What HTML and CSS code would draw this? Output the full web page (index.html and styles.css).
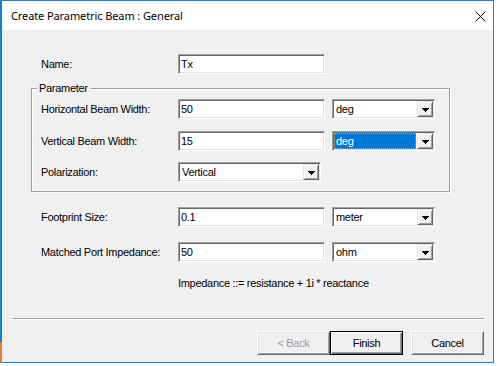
FILE: index.html
```html
<!DOCTYPE html>
<html lang="en">
<head>
  <meta charset="UTF-8">
  <title>Create Parametric Beam : General</title>
  <link rel="stylesheet" href="styles.css">
</head>
<body>
  <div class="window">
    <div class="titlebar">
      <span class="title">Create Parametric Beam : General</span>
      <svg class="close" width="11" height="11" viewBox="0 0 11 11">
        <path d="M0.5 0.5 L10.5 10.5 M10.5 0.5 L0.5 10.5" stroke="#000" stroke-width="1"/>
      </svg>
    </div>
    <div class="content">
      <div class="row">
        <label>Name:</label>
        <div class="field">Tx</div>
      </div>

      <div class="group">
        <span class="group-title">Parameter</span>
        <div class="row">
          <label>Horizontal Beam Width:</label>
          <div class="field">50</div>
          <div class="combo">
            <span class="combo-text">deg</span>
            <span class="combo-btn"><svg width="7" height="4" viewBox="0 0 7 4"><polygon points="0,0 7,0 3.5,4" fill="#000"/></svg></span>
          </div>
        </div>
        <div class="row row-v">
          <label>Vertical Beam Width:</label>
          <div class="field">15</div>
          <div class="combo">
            <span class="combo-text selected">deg</span>
            <span class="combo-btn"><svg width="7" height="4" viewBox="0 0 7 4"><polygon points="0,0 7,0 3.5,4" fill="#000"/></svg></span>
          </div>
        </div>
        <div class="row row-p">
          <label>Polarization:</label>
          <div class="combo combo-wide">
            <span class="combo-text">Vertical</span>
            <span class="combo-btn"><svg width="7" height="4" viewBox="0 0 7 4"><polygon points="0,0 7,0 3.5,4" fill="#000"/></svg></span>
          </div>
        </div>
      </div>

      <div class="row row-foot">
        <label>Footprint Size:</label>
        <div class="field">0.1</div>
        <div class="combo">
          <span class="combo-text">meter</span>
          <span class="combo-btn"><svg width="7" height="4" viewBox="0 0 7 4"><polygon points="0,0 7,0 3.5,4" fill="#000"/></svg></span>
        </div>
      </div>
      <div class="row row-imp">
        <label>Matched Port Impedance:</label>
        <div class="field">50</div>
        <div class="combo">
          <span class="combo-text">ohm</span>
          <span class="combo-btn"><svg width="7" height="4" viewBox="0 0 7 4"><polygon points="0,0 7,0 3.5,4" fill="#000"/></svg></span>
        </div>
      </div>

      <p class="note">Impedance ::= resistance + 1i * reactance</p>

      <div class="separator"></div>

      <div class="buttons">
        <button class="btn" disabled>&lt; Back</button>
        <button class="btn default">Finish</button>
        <button class="btn cancel">Cancel</button>
      </div>
    </div>
  </div>
</body>
</html>
```

FILE: styles.css
```css
body {
  margin: 0;
  background: #fff;
  font-family: "Liberation Sans", Arial, sans-serif;
  font-size: 11px;
  letter-spacing: -0.3px;
  color: #000;
}
.window {
  position: relative;
  width: 494px;
  height: 363px;
  box-sizing: border-box;
  border: 1px solid #1a7fd4;
  border-left-width: 2px;
  background: #f0f0f0;
}
/* stray orange edge at bottom left */
.window::after {
  content: '';
  position: absolute;
  left: -2px;
  top: 341px;
  width: 2px;
  height: 21px;
  background: #e8801e;
}
.titlebar {
  height: 29px;
  background: #fff;
  display: flex;
  align-items: center;
  justify-content: space-between;
  padding: 0 7px 0 9px;
}
.title {
  font-family: "Noto Sans", sans-serif;
  font-size: 11px;
  letter-spacing: -0.1px;
  margin-top: -1px;
}
.close {
  display: block;
  margin-top: 1px;
}
.content {
  padding-top: 24px;
}
.row {
  display: grid;
  grid-template-columns: 130px 147px 103px;
  column-gap: 7px;
  align-items: center;
  height: 20px;
  padding-left: 39px;
}
label {
  white-space: nowrap;
}
.field {
  height: 20px;
  box-sizing: border-box;
  background: #fff;
  border: 1px solid;
  border-color: #a0a0a0 #fff #fff #a0a0a0;
  box-shadow: inset 1px 1px 0 #696969, inset -1px -1px 0 #e3e3e3;
  padding: 0 2px;
  line-height: 18px;
}
.combo {
  height: 20px;
  box-sizing: border-box;
  background: #fff;
  border: 1px solid;
  border-color: #a0a0a0 #fff #fff #a0a0a0;
  box-shadow: inset 1px 1px 0 #696969, inset -1px -1px 0 #e3e3e3;
  display: flex;
  padding: 1px;
}
.combo-wide {
  width: 143px;
}
.combo-text {
  flex: 1;
  padding-left: 2px;
  line-height: 16px;
}
.combo-text.selected {
  background: #0078d7;
  color: #fff;
  outline: 1px dotted #e8902a;
  outline-offset: -1px;
  margin-right: 1px;
}
.combo-btn {
  width: 16px;
  height: 16px;
  box-sizing: border-box;
  background: #f0f0f0;
  border: 1px solid;
  border-color: #e3e3e3 #696969 #696969 #e3e3e3;
  box-shadow: inset 1px 1px 0 #fff, inset -1px -1px 0 #a0a0a0;
  display: flex;
  align-items: center;
  justify-content: center;
}
.combo-btn svg {
  display: block;
  shape-rendering: crispEdges;
  margin-top: 1px;
}
.group {
  margin: 14px 0 0 29px;
  width: 419px;
  box-sizing: border-box;
  border: 1px solid #a0a0a0;
  box-shadow: inset 1px 1px 0 #fff, 1px 1px 0 #fff;
  padding: 0 0 9px 9px;
}
.group-title {
  display: table;
  margin: -7px 0 0 -4px;
  padding: 0 2px;
  line-height: 13px;
  background: #f0f0f0;
}
.group .row {
  padding-left: 0;
  margin-top: 4px;
}
.group .row-v {
  margin-top: 12px;
}
.group .row-p {
  margin-top: 11px;
}
.row-foot {
  margin-top: 15px;
}
.row-imp {
  margin-top: 15px;
}
.note {
  margin: 15px 0 0 176px;
  line-height: 13px;
}
.separator {
  margin: 28px 9px 0 11px;
  border-top: 1px solid #a0a0a0;
  border-bottom: 1px solid #fff;
}
.buttons {
  display: flex;
  justify-content: flex-end;
  padding-right: 9px;
  margin-top: 11px;
}
.btn {
  width: 73px;
  height: 24px;
  box-sizing: border-box;
  font-family: "Liberation Sans", Arial, sans-serif;
  font-size: 11px;
  letter-spacing: -0.3px;
  color: #000;
  background: #f0f0f0;
  border: 1px solid;
  border-color: #fff #696969 #696969 #fff;
  box-shadow: inset 1px 1px 0 #e3e3e3, inset -1px -1px 0 #a0a0a0;
  padding: 0;
}
.btn:disabled {
  color: #a0a0a0;
}
.btn.default {
  border-color: #000;
  box-shadow: inset 1px 1px 0 #fff, inset -1px -1px 0 #696969, inset -2px -2px 0 #a0a0a0;
}
.btn.cancel {
  margin-left: 8px;
}
```
